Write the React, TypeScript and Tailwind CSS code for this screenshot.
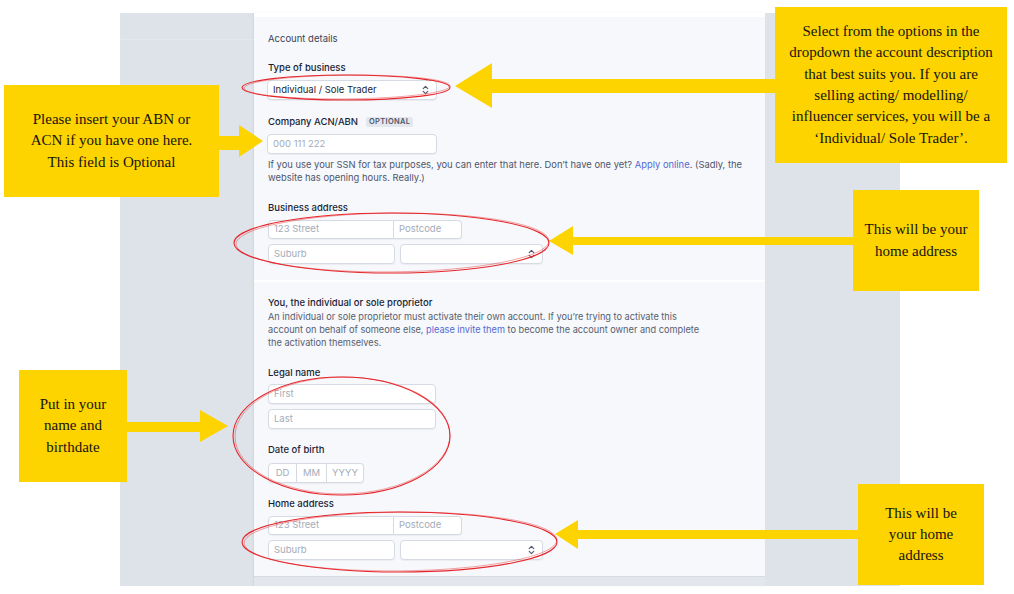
import React from 'react';

const YELLOW = '#fdd300';
const RED = '#e5262b';

const label = 'text-[9.5px] leading-[14px] font-medium text-[#1a1f36]';
const field =
  'bg-white border border-[#d6dbe3] text-[9.5px] flex items-center px-[5px] shadow-[0_1px_1px_rgba(50,50,93,0.06)]';
const ph = 'text-[#a3acb9]';

function UpDown() {
  return (
    <svg width="7" height="10" viewBox="0 0 7 10" fill="none" stroke="#4f566b" strokeWidth="1.1" strokeLinecap="round" strokeLinejoin="round">
      <path d="M1.2 3.6 3.5 1.3 5.8 3.6" />
      <path d="M1.2 6.4 3.5 8.7 5.8 6.4" />
    </svg>
  );
}

function AddressFields() {
  return (
    <>
      <div className="mt-[5px] flex">
        <div className={`${field} ${ph} w-[126px] h-[19px] rounded-l-[4px]`}>123 Street</div>
        <div className={`${field} ${ph} w-[68px] h-[19px] rounded-r-[4px] border-l-0`}>Postcode</div>
      </div>
      <div className="mt-[5px] flex gap-[5px]">
        <div className={`${field} ${ph} w-[127px] h-5 rounded-[4px]`}>Suburb</div>
        <div className={`${field} w-[143px] h-5 rounded-[4px] justify-end pr-[7px]`}>
          <UpDown />
        </div>
      </div>
    </>
  );
}

function Callout({ className, lines }: { className: string; lines: string[] }) {
  return (
    <div
      className={`absolute bg-[#fdd300] flex flex-col items-center justify-center text-center font-['Liberation_Serif',serif] text-[15px] leading-[21.3px] text-[#15140f] ${className}`}
    >
      {lines.map((l) => (
        <div key={l} className="whitespace-nowrap">
          {l}
        </div>
      ))}
    </div>
  );
}

function Ellipse({ cx, cy, rx, ry }: { cx: number; cy: number; rx: number; ry: number }) {
  return (
    <g fill="none" stroke={RED}>
      <ellipse cx={cx} cy={cy} rx={rx} ry={ry} strokeWidth="1.1" />
      <ellipse cx={cx + 1} cy={cy - 0.5} rx={rx - 1} ry={ry - 0.6} strokeWidth="0.7" opacity="0.6" transform={`rotate(-0.6 ${cx} ${cy})`} />
    </g>
  );
}

export default function App() {
  return (
    <div className="relative w-[1014px] h-[594px] bg-white overflow-hidden font-['Inter',sans-serif]">
      <div className="ml-[120px] mt-[13px] w-[780px] h-[573px] bg-[#dee2e9] flex">
        <div className="w-[134px] pt-[26px]">
          <div className="border-t border-dotted border-[#e9ecf1]" />
        </div>

        <div className="w-[511px] flex flex-col bg-[#f6f8fb] border-t-4 border-white shadow-[-1px_0_2px_rgba(0,0,0,0.06)]">
          {/* Account details */}
          <section className="px-[14px] pt-[15px] pb-[16px] border-b-2 border-white">
            <div className="text-[9.5px] leading-[14px] text-[#3c4257]">Account details</div>

            <div className={`${label} mt-[15px]`}>Type of business</div>
            <div className={`${field} mt-[5px] -ml-px w-[170px] h-5 rounded-[4px] justify-between pr-[7px] text-[#1a1f36]`}>
              <span>Individual / Sole Trader</span>
              <UpDown />
            </div>

            <div className="mt-[15px] flex items-center gap-2">
              <span className={label}>Company ACN/ABN</span>
              <span className="h-[10px] px-[3px] rounded-[2px] bg-[#e3e8ee] text-[7.5px] leading-[10px] font-semibold tracking-[0.3px] text-[#4f566b]">
                OPTIONAL
              </span>
            </div>
            <div className={`${field} ${ph} mt-[5px] -ml-px w-[170px] h-5 rounded-[4px]`}>000 111 222</div>
            <p className="mt-[4px] text-[9.4px] leading-[13px] text-[#4f566b] whitespace-nowrap">
              If you use your SSN for tax purposes, you can enter that here. Don’t have one yet?{' '}
              <span className="text-[#5469d4]">Apply online</span>. (Sadly, the
              <br />
              website has opening hours. Really.)
            </p>

            <div className={`${label} mt-[17px]`}>Business address</div>
            <AddressFields />
          </section>

          {/* Individual */}
          <section className="px-[14px] pt-[14px] pb-[16px]">
            <div className={label}>You, the individual or sole proprietor</div>
            <p className="text-[9.2px] leading-[13px] text-[#575f72] whitespace-nowrap">
              An individual or sole proprietor must activate their own account. If you’re trying to activate this
              <br />
              account on behalf of someone else, <span className="text-[#5469d4]">please invite them</span> to become the
              account owner and complete
              <br />
              the activation themselves.
            </p>

            <div className={`${label} mt-[17px]`}>Legal name</div>
            <div className={`${field} ${ph} mt-[4px] w-[168px] h-5 rounded-[4px]`}>First</div>
            <div className={`${field} ${ph} mt-[5px] w-[168px] h-5 rounded-[4px]`}>Last</div>

            <div className={`${label} mt-[14px]`}>Date of birth</div>
            <div className="mt-[6px] flex">
              <div className={`${field} ${ph} w-[29px] h-5 rounded-l-[4px] justify-center px-0`}>DD</div>
              <div className={`${field} ${ph} w-[30px] h-5 border-l-0 justify-center px-0`}>MM</div>
              <div className={`${field} ${ph} w-[37px] h-5 border-l-0 rounded-r-[4px] justify-center px-0`}>YYYY</div>
            </div>

            <div className={`${label} mt-[14px]`}>Home address</div>
            <AddressFields />
          </section>

          <div className="flex-1 bg-[#e3e6eb] border-t border-[#d7dbe2]" />
        </div>
      </div>

      {/* annotations */}
      <svg className="absolute inset-0 pointer-events-none" width="1014" height="594">
        <g fill={YELLOW}>
          <polygon points="455,86 492,63 492,79 777,79 777,93 492,93 492,108" />
          <polygon points="217,136 239,136 239,125 263,141 239,157 239,150 217,150" />
          <polygon points="549,241 573,226 573,237 854,237 854,245 573,245 573,255" />
          <polygon points="126,422 200,422 200,410 228,426 200,442 200,432 126,432" />
          <polygon points="555,534 578,520 578,530 859,530 859,539 578,539 578,549" />
        </g>
        <Ellipse cx={346} cy={87.5} rx={104} ry={12.5} />
        <Ellipse cx={391.5} cy={243} rx={157.5} ry={30} />
        <Ellipse cx={341.5} cy={436} rx={108.5} ry={59} />
        <Ellipse cx={399.5} cy={542} rx={157.5} ry={30} />
      </svg>

      <Callout
        className="left-[775px] top-[7px] w-[232px] h-[156px]"
        lines={[
          'Select from the options in the',
          'dropdown the account description',
          'that best suits you. If you are',
          'selling acting/ modelling/',
          'influencer services, you will be a',
          '‘Individual/ Sole Trader’.',
        ]}
      />
      <Callout
        className="left-[4px] top-[85px] w-[215px] h-[112px]"
        lines={['Please insert your ABN or', 'ACN if you have one here.', 'This field is Optional']}
      />
      <Callout className="left-[853px] top-[190px] w-[126px] h-[101px]" lines={['This will be your', 'home address']} />
      <Callout className="left-[19px] top-[370px] w-[108px] h-[112px]" lines={['Put in your', 'name and', 'birthdate']} />
      <Callout className="left-[858px] top-[484px] w-[126px] h-[101px]" lines={['This will be', 'your home', 'address']} />
    </div>
  );
}
